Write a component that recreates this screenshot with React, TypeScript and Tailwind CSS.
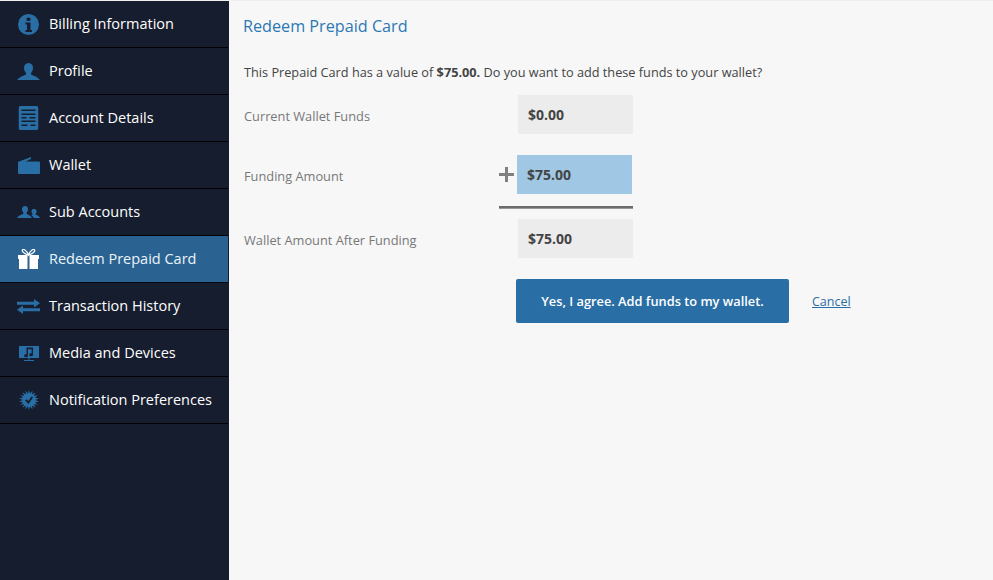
import React from "react";

const c = "#2a6ea6";
const bg = "#161d2e";

const burst = Array.from({ length: 36 }, (_, i) => {
  const r = i % 2 === 0 ? 10 : 6.4;
  const a = (i * Math.PI) / 18;
  return `${(10 + r * Math.sin(a)).toFixed(2)},${(10 - r * Math.cos(a)).toFixed(2)}`;
}).join(" ");

const icons: Record<string, React.ReactNode> = {
  info: (
    <svg width="21" height="21" viewBox="0 0 21 21">
      <circle cx="10.5" cy="10.5" r="10.5" fill={c} />
      <rect x="8.500" y="3.500" width="4" height="3.500" rx="1.500" fill={bg} />
      <path d="M7.500 8.500h5v7.500h1.500v2H7.500v-2H9v-5.500H7.500z" fill={bg} />
    </svg>
  ),
  profile: (
    <svg width="23" height="17" viewBox="0 0 23 17">
      <path d="M11.500 0c3 0 4.500 2.200 4.500 5 0 2.200-1 3.900-2 5v1.500c2.500 1.300 6.500 2.500 9 5.500H0c2.500-3 6.500-4.200 9-5.500V10C8 8.900 7 7.200 7 5c0-2.800 1.500-5 4.500-5z" fill={c} />
    </svg>
  ),
  account: (
    <svg width="20" height="24" viewBox="0 0 20 24" className="-translate-x-[0.5px]">
      <rect width="20" height="24" rx="2" fill={c} />
      <path d="M3 3.500h14v1.500H3zM3 7.500h14V9H3zM3 11h5v1.500H3zM11 11h6v1.500h-6zM3 14.500h14V16H3zM3 18.500h6V20H3zM12 18.500h5V20h-5z" fill={bg} />
    </svg>
  ),
  wallet: (
    <svg width="22" height="17" viewBox="0 0 22 17">
      <path d="M1 4.500 13 0v2L7.500 4.500H21a1 1 0 0 1 1 1V16a1 1 0 0 1-1 1H1a1 1 0 0 1-1-1V5.500a1 1 0 0 1 1-1z" fill={c} />
    </svg>
  ),
  sub: (
    <svg width="23" height="12" viewBox="0 0 23 12">
      <path d="M8 0c2 0 3 1.500 3 3.300 0 1.500-.7 2.700-1.400 3.400v1.100c1.500.8 3.900 1.600 5.400 4.200H0c1.200-2.600 4.800-3.400 6.400-4.200V6.700C5.700 6 5 4.800 5 3.300 5 1.500 6 0 8 0z" fill={c} />
      <path d="M17.500 3c1.400 0 2.100 1.100 2.100 2.400 0 1-.5 1.900-1 2.400v.7c1.100.5 3.300 1.200 4.400 3.500h-6.300c-.5-1.300-1.500-2.300-2.700-3 .6-.2 1.200-.4 1.500-.6v-.6c-.5-.5-1-1.400-1-2.400 0-1.300.6-2.400 2-2.400z" fill={c} />
    </svg>
  ),
  gift: (
    <svg width="21" height="20" viewBox="0 0 21 20">
      <path d="M0 6h9.500v14H1v-10H0zM11.500 6H21v4h-1v10h-8.500z" fill="#fff" />
      <path d="M9.800 6C7.500 5 3.600 3 4.300 1 5.500-.5 8.800 1.500 10.500 6 12.200 1.500 15.500-.5 16.700 1 17.400 3 13.500 5 11.200 6" fill="none" stroke="#fff" strokeWidth="1.200" />
    </svg>
  ),
  transfer: (
    <svg width="23" height="15" viewBox="0 0 23 15">
      <path d="M0 2.700h17V0l6 4.200-6 4.200V5.700H0zM23 9.300H6V6.600L0 10.800 6 15v-2.700h17z" fill={c} />
    </svg>
  ),
  media: (
    <svg width="20" height="15" viewBox="0 0 20 15">
      <rect width="20" height="12" fill={c} />
      <rect x="5" y="14" width="10" height="1" fill={c} />
      <rect x="9.500" y="12" width="1" height="2" fill={c} />
      <path d="M7.500 1.500h6.500v7.300a1.900 1.500 0 1 1-1.400-1.400V3.300H8.900v6.500a1.900 1.500 0 1 1-1.400-1.400z" fill={bg} />
    </svg>
  ),
  notify: (
    <svg width="20" height="20" viewBox="0 0 20 20">
      <polygon points={burst} fill={c} />
      <path d="M6.800 9.800l2.500 2.700 4-5.500" fill="none" stroke={bg} strokeWidth="1.900" />
    </svg>
  ),
};

const items = [
  ["info", "Billing Information"],
  ["profile", "Profile"],
  ["account", "Account Details"],
  ["wallet", "Wallet"],
  ["sub", "Sub Accounts"],
  ["gift", "Redeem Prepaid Card"],
  ["transfer", "Transaction History"],
  ["media", "Media and Devices"],
  ["notify", "Notification Preferences"],
];

function Amount({ value, blue }: { value: string; blue?: boolean }) {
  return (
    <div
      className={`w-[115px] h-[39px] pl-[10px] flex items-center text-[14px] font-bold text-[#444] ${
        blue ? "bg-[#a0c8e5]" : "bg-[#ececec]"
      }`}
    >
      {value}
    </div>
  );
}

export default function App() {
  return (
    <div
      className="w-[993px] h-[580px] overflow-hidden flex bg-[#f7f7f7] border-t border-[#efefef]"
      style={{ fontFamily: '"Open Sans", sans-serif' }}
    >
      <nav className="w-[229px] shrink-0 bg-[#161d2e] flex flex-col">
        {items.map(([icon, label], i) => (
          <div
            key={label}
            className={`h-[47px] mr-px border-b border-black/90 flex items-center text-[14.500px] ${
              i === 5 ? "bg-[#2a6391] text-[#eaf3fa]" : "text-white"
            }`}
          >
            <span className="w-[57px] shrink-0 flex justify-center">{icons[icon]}</span>
            <span className="whitespace-nowrap -ml-[8px]">{label}</span>
          </div>
        ))}
      </nav>
      <main className="flex-1 pl-[14px] pt-[13px]">
        <h1 className="text-[16.200px] leading-[24px] text-[#2b78b4] font-normal">Redeem Prepaid Card</h1>
        <p className="mt-[25px] pl-px text-[12.720px] leading-[18px] text-[#444]">
          This Prepaid Card has a value of <b>$75.00.</b> Do you want to add these funds to your wallet?
        </p>
        <div className="mt-[14px] pl-px flex flex-col text-[12.800px] text-[#777]">
          <div className="flex items-center h-[39px]">
            <span className="w-[274px] pt-[5px]">Current Wallet Funds</span>
            <Amount value="$0.00" />
          </div>
          <div className="flex items-center h-[39px] mt-[21px] -ml-px">
            <span className="w-[255px] pl-px pt-[5px]">Funding Amount</span>
            <span className="w-[19px] flex justify-start pl-px">
              <svg width="15" height="15" viewBox="0 0 15 15">
                <path d="M6 0h3v6h6v3H9v6H6V9H0V6h6z" fill="#808080" />
              </svg>
            </span>
            <Amount value="$75.00" blue />
          </div>
          <div className="ml-[255px] w-[134px] h-[3px] mt-[12px] bg-[#6d6d6d] border-b border-[#999]" />
          <div className="flex items-center h-[39px] mt-[10px]">
            <span className="w-[274px] pt-[5px]">Wallet Amount After Funding</span>
            <Amount value="$75.00" />
          </div>
        </div>
        <div className="mt-[21px] ml-[273px] flex items-center">
          <button className="w-[273px] h-[44px] pt-px rounded-[2px] bg-[#2a6ea6] text-white text-[12.800px] font-semibold">
            Yes, I agree. Add funds to my wallet.
          </button>
          <a className="ml-[23px] mt-[3px] text-[12.500px] text-[#2a6ea6] underline" href="#">
            Cancel
          </a>
        </div>
      </main>
    </div>
  );
}
